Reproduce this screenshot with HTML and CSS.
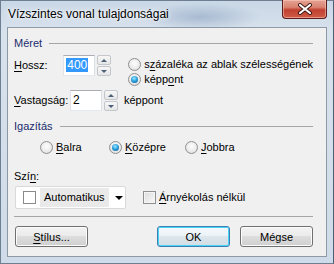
FILE: index.html
```html
<!DOCTYPE html>
<html lang="hu">
<head>
    <meta charset="UTF-8">
    <title>Vízszintes vonal tulajdonságai</title>
    <link rel="stylesheet" href="styles.css">
</head>
<body>
    <div class="window">
        <div class="titlebar">
            <span class="title">Vízszintes vonal tulajdonságai</span>
            <span class="close">
                <svg width="16" height="12" viewBox="0 0 16 12">
                    <path d="M3 2 L13 10 M13 2 L3 10" stroke="#3b1510" stroke-width="4" stroke-linecap="round"/>
                    <path d="M3 2 L13 10 M13 2 L3 10" stroke="#fff" stroke-width="2.2" stroke-linecap="round"/>
                </svg>
            </span>
        </div>

        <div class="client">
            <div class="group">
                <span>Méret</span>
                <span class="rule"></span>
            </div>

            <div class="row size-row">
                <span class="lbl"><u>H</u>ossz:</span>
                <div class="spin-field">
                    <span class="edit"><span class="sel">400</span></span>
                    <span class="spin"><span class="up"></span><span class="down"></span></span>
                </div>
                <div class="unit-choice">
                    <div class="opt"><span class="radio"></span>s<u>z</u>ázaléka az ablak szélességének</div>
                    <div class="opt"><span class="radio on"></span>képp<u>o</u>nt</div>
                </div>
            </div>

            <div class="row thick-row">
                <span class="lbl"><u>V</u>astagság:</span>
                <div class="spin-field">
                    <span class="edit">2</span>
                    <span class="spin"><span class="up"></span><span class="down"></span></span>
                </div>
                <span class="unit">képpont</span>
            </div>

            <div class="group align-group">
                <span>Igazítás</span>
                <span class="rule"></span>
            </div>

            <div class="row align-row">
                <div class="opt balra"><span class="radio"></span><u>B</u>alra</div>
                <div class="opt kozepre"><span class="radio on"></span><u>K</u>özépre</div>
                <div class="opt"><span class="radio"></span><u>J</u>obbra</div>
            </div>

            <div class="color-label">Szí<u>n</u>:</div>

            <div class="row color-row">
                <div class="combo">
                    <span class="swatch"></span>
                    <span class="combo-text">Automatikus</span>
                    <span class="combo-arrow"></span>
                </div>
                <div class="opt check-opt"><span class="check"></span><u>Á</u>rnyékolás nélkül</div>
            </div>

            <div class="separator"></div>

            <div class="row buttons">
                <button class="btn"><u>S</u>tílus...</button>
                <span class="spacer"></span>
                <button class="btn default">OK</button>
                <button class="btn">Mégse</button>
            </div>
        </div>
    </div>
</body>
</html>
```

FILE: styles.css
```css
body {
    margin: 0;
    font-family: "Liberation Sans", Arial, sans-serif;
    font-size: 11px;
    color: #000;
}

u {
    text-decoration-thickness: 1px;
    text-underline-offset: 2px;
}

.window {
    width: 334px;
    height: 264px;
    display: flex;
    flex-direction: column;
    box-sizing: border-box;
    border: 1px solid #6f7f92;
    border-right-color: #4d5d73;
    background:
        radial-gradient(ellipse 60px 14px at 200px 16px, rgba(120, 145, 180, 0.45), transparent),
        linear-gradient(180deg, #c9d7e6 0%, #d8e2ed 30px, #cfdbe8 100%);
}

/* title bar */

.titlebar {
    height: 26px;
    display: flex;
    align-items: flex-start;
}

.title {
    margin: 5px 0 0 7px;
    font-size: 12px;
    line-height: 16px;
    text-shadow: 0 0 6px #fff, 0 0 3px #fff;
}

.close {
    margin-left: auto;
    margin-right: 6px;
    margin-top: -1px;
    width: 45px;
    height: 19px;
    box-sizing: border-box;
    border: 1px solid #5a1e18;
    border-top: none;
    border-radius: 0 0 4px 4px;
    background: linear-gradient(180deg, #e4a291 0%, #d98472 40%, #c0402f 55%, #cf5d48 100%);
    box-shadow: inset 0 0 0 1px rgba(255, 210, 200, 0.5);
    display: flex;
    align-items: center;
    justify-content: center;
}

/* client area */

.client {
    flex: 1;
    margin: 0 6px 6px 6px;
    border: 1px solid #8e99a6;
    background: #f0f0f0;
    padding: 0 13px 0 6px;
    display: flex;
    flex-direction: column;
}

.row {
    display: flex;
    align-items: center;
}

.group {
    display: flex;
    align-items: center;
    margin-top: 8px;
    line-height: 15px;
    color: #1a2c6e;
}

.rule {
    flex: 1;
    height: 0;
    border-top: 1px solid #a6a6a6;
    margin-left: 7px;
}

.lbl {
    width: 56px;
    line-height: 15px;
}

.spin-field {
    display: flex;
    gap: 2px;
}

.edit {
    width: 32px;
    height: 21px;
    box-sizing: border-box;
    border: 1px solid #abadb3;
    border-left-color: #e2e3ea;
    border-bottom-color: #e3e9ef;
    border-right-color: #dbdfe6;
    background: #fff;
    padding: 2px 0 0 2px;
    line-height: 15px;
    font-size: 12px;
}

.sel {
    background: #3399ff;
    color: #fff;
    padding: 0 1px;
}

.spin {
    width: 14px;
    height: 21px;
    display: flex;
    flex-direction: column;
    gap: 1px;
}

.spin .up,
.spin .down {
    flex: 1;
    box-sizing: border-box;
    border: 1px solid #c3c6cb;
    border-radius: 2px;
    background: linear-gradient(180deg, #f7f7f7, #e6e6e6);
    position: relative;
}

.spin .up::after,
.spin .down::after {
    content: '';
    position: absolute;
    left: 3px;
    top: 3px;
    border-left: 3px solid transparent;
    border-right: 3px solid transparent;
}

.spin .up::after {
    border-bottom: 3px solid #4c607a;
}

.spin .down::after {
    border-top: 3px solid #4c607a;
}

.size-row {
    margin-top: 4px;
    align-items: flex-start;
}

.size-row .lbl {
    margin-top: 3px;
}

.unit-choice {
    margin: 2px 0 0 17px;
}

.opt {
    display: flex;
    align-items: center;
    line-height: 15px;
    white-space: nowrap;
}

.radio {
    width: 13px;
    height: 13px;
    box-sizing: border-box;
    border-radius: 50%;
    border: 1px solid #8e8f8f;
    background: radial-gradient(circle at 50% 40%, #fdfdfd 0%, #ececec 55%, #d4d4d4 100%);
    margin-right: 3px;
    display: flex;
    align-items: center;
    justify-content: center;
}

.radio.on::after {
    content: '';
    width: 7px;
    height: 7px;
    border-radius: 50%;
    background: radial-gradient(circle at 45% 35%, #9fe8ff 0%, #2fa4e0 45%, #0b4f86 100%);
}

.thick-row {
    margin-top: 3px;
}

.unit {
    margin-left: 6px;
    line-height: 15px;
}

.align-group {
    margin-top: 8px;
}

.align-row {
    margin: 6px 0 0 26px;
}

.balra {
    width: 69px;
}

.kozepre {
    width: 76px;
}

.color-label {
    margin-top: 14px;
    line-height: 15px;
}

.color-row {
    margin-top: 2px;
    margin-left: 1px;
}

.combo {
    width: 111px;
    height: 23px;
    box-sizing: border-box;
    border: 1px solid #d9d9d9;
    border-radius: 2px;
    background: #fff;
    display: flex;
    align-items: center;
    padding-left: 7px;
}

.swatch {
    width: 13px;
    height: 13px;
    box-sizing: border-box;
    border: 1px solid #8a8a8a;
    background: #fff;
}

.combo-text {
    margin-left: 4px;
    padding: 0 4px;
    height: 19px;
    line-height: 19px;
    background: #e9e9e9;
}

.combo-arrow {
    margin-left: 6px;
    border-left: 4px solid transparent;
    border-right: 4px solid transparent;
    border-top: 4px solid #000;
}

.check-opt {
    margin-left: 17px;
}

.check {
    width: 13px;
    height: 13px;
    box-sizing: border-box;
    border: 1px solid #8e8f8f;
    background: linear-gradient(135deg, #dcdcdc, #f8f8f8);
    box-shadow: inset 0 0 0 1px #f4f4f4;
    margin-right: 3px;
}

.separator {
    margin-top: 7px;
    border-top: 1px solid #a6a6a6;
}

.buttons {
    margin-top: 9px;
    gap: 10px;
}

.spacer {
    flex: 1;
}

.btn {
    width: 73px;
    height: 21px;
    box-sizing: border-box;
    border: 1px solid #707070;
    border-radius: 3px;
    background: linear-gradient(180deg, #f2f2f2 0%, #ebebeb 49%, #dddddd 50%, #cfcfcf 100%);
    box-shadow: inset 0 0 0 1px #fcfcfc;
    font: inherit;
    color: #000;
    padding: 0;
    margin: 0;
}

.btn:first-child {
    margin-left: 1px;
}

.btn.default {
    border-color: #3c7fb1;
    box-shadow: inset 0 0 0 1px #48d3fb;
    background: linear-gradient(180deg, #f3f8fb 0%, #ebf2f6 49%, #dce6ec 50%, #d2dde4 100%);
}
```
